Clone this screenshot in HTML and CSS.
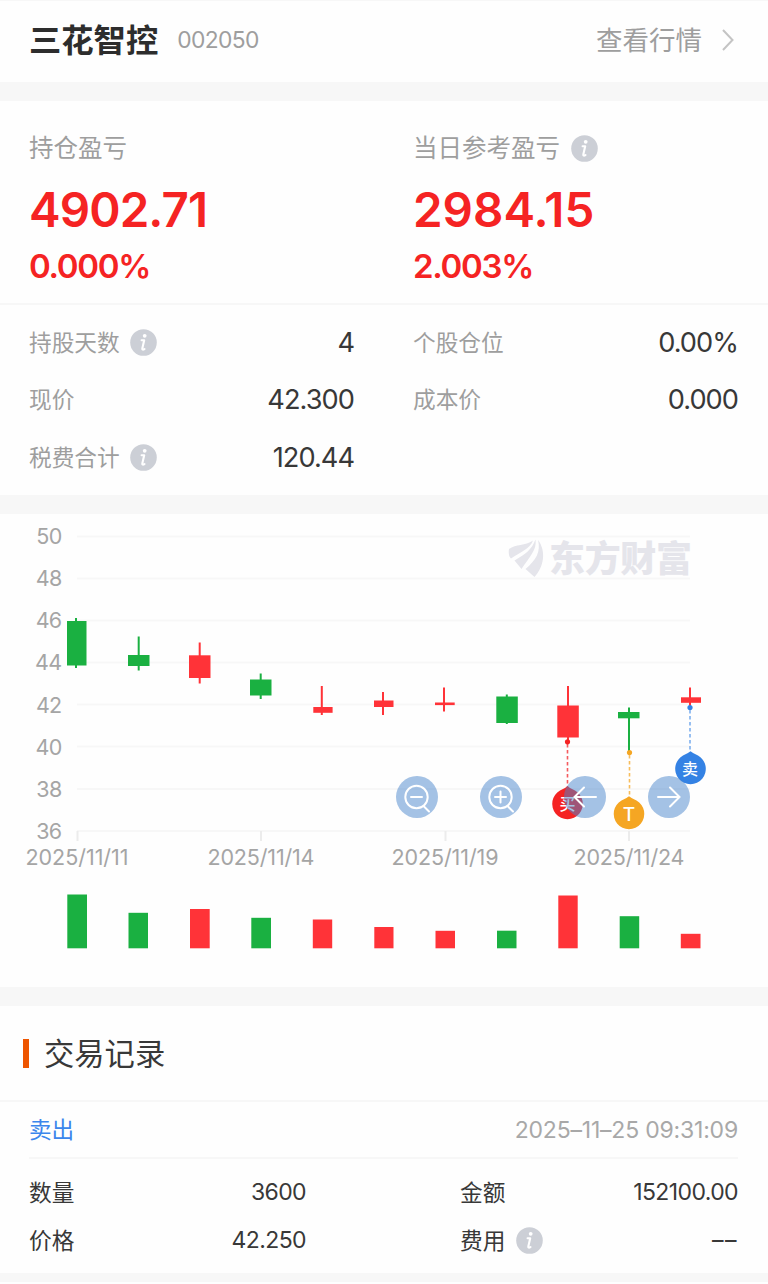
FILE: index.html
```html
<!DOCTYPE html>
<html lang="zh-CN">

<head>
    <meta charset="UTF-8">
    <meta name="viewport" content="width=device-width, initial-scale=1.0">
    <title>三花智控 002050</title>
    <link rel="stylesheet" href="styles.css">
</head>

<body>

    <svg class="defs" width="0" height="0">
        <symbol id="info" viewBox="0 0 27 27">
            <circle cx="13.5" cy="13.5" r="13.3" fill="#cccfd6" />
            <circle cx="14.7" cy="6.8" r="1.9" fill="#fff" />
            <path d="M11.600 11.200h2.600L12.300 19.500q-.2 1.900 2.200.6" fill="none" stroke="#fff" stroke-width="2.100" stroke-linecap="round" stroke-linejoin="round" />
        </symbol>
    </svg>

    <header class="header">
        <h1 class="stock-name">三花智控</h1>
        <span class="stock-code">002050</span>
        <a class="quote-link" href="#">查看行情
            <svg class="chevron" viewBox="0 0 12 22"><path d="M1 1l9.500 10L1 21" /></svg>
        </a>
    </header>

    <section class="summary">
        <div class="profit">
            <div class="profit-item">
                <div class="profit-label">持仓盈亏</div>
                <div class="profit-value">4902.71</div>
                <div class="profit-rate">0.000%</div>
            </div>
            <div class="profit-item">
                <div class="profit-label">当日参考盈亏<svg class="info"><use href="#info" /></svg></div>
                <div class="profit-value today">2984.15</div>
                <div class="profit-rate">2.003%</div>
            </div>
        </div>
        <div class="details">
            <div class="detail"><span class="label">持股天数</span><svg class="info"><use href="#info" /></svg><b class="num">4</b></div>
            <div class="detail"><span class="label">个股仓位</span><b class="num">0.00%</b></div>
            <div class="detail"><span class="label">现价</span><b class="num">42.300</b></div>
            <div class="detail"><span class="label">成本价</span><b class="num">0.000</b></div>
            <div class="detail"><span class="label">税费合计</span><svg class="info"><use href="#info" /></svg><b class="num">120.44</b></div>
        </div>
    </section>

    <section class="chart-section">
        <svg class="chart" viewBox="0 514 768 473">
            <!-- grid -->
            <path class="grid" d="M77 536.500H690M77 578.500H690M77 620.500H690M77 662.500H690M77 704.500H690M77 746.500H690M77 789H690M77 831H690" />
            <path class="tick" d="M77.500 831v10M261 831v10M445.500 831v10M629 831v10" />

            <!-- watermark -->
            <g class="watermark">
                <path d="M509 549C516 544 525 546 533 540.500C530 549 520 552 511 558.500C508.500 556 508.500 552 509 549Z" />
                <path d="M535.500 539.500C537 550 530 556 521.500 569L514.500 560.500C526 554 532 549 535.500 539.500Z" />
                <path d="M538 540C546.500 551 544 567 534.500 577L525.500 569C536 560 541 552 538 540Z" />
                <text x="549" y="571.500" textLength="143">东方财富</text>
            </g>

            <g class="y-axis">
                <text x="61.500" y="544">50</text>
                <text x="61.500" y="586">48</text>
                <text x="61.500" y="628.200">46</text>
                <text x="61.500" y="670.300">44</text>
                <text x="61.500" y="712.500">42</text>
                <text x="61.500" y="754.500">40</text>
                <text x="61.500" y="796.500">38</text>
                <text x="61.500" y="839">36</text>
            </g>
            <g class="x-axis">
                <text x="25.500" y="865" textLength="103">2025/11/11</text>
                <text x="207.500" y="865" textLength="107">2025/11/14</text>
                <text x="391.500" y="865" textLength="107">2025/11/19</text>
                <text x="573.500" y="865" textLength="111">2025/11/24</text>
            </g>

            <!-- candles -->
            <g class="down">
                <path d="M76 618v50M138.700 636.500v34M260.700 673.500v25.500M506.800 694.500v29.500M629 707.500v44" />
                <rect x="67" y="621" width="19.500" height="44.500" />
                <rect x="128" y="655" width="21.500" height="11" />
                <rect x="250" y="679.500" width="21.500" height="16" />
                <rect x="496.300" y="696.500" width="21.500" height="26.500" />
                <rect x="618" y="712" width="21.500" height="6.300" />
            </g>
            <g class="up">
                <path d="M199.700 642.500v41M321.800 686v29M383 692v23M444 687.500v24M568 686v56M690 687.500v19" />
                <rect x="189" y="655.300" width="21.500" height="22.700" />
                <rect x="313.300" y="707" width="19.300" height="5.800" />
                <rect x="374" y="700.500" width="19.500" height="6.500" />
                <rect x="435" y="702.500" width="19.700" height="2.600" />
                <rect x="557.300" y="705.500" width="21.500" height="32" />
                <rect x="681" y="697.300" width="20" height="5.500" />
            </g>

            <!-- volume -->
            <g class="down">
                <rect x="67.300" y="894.500" width="19.700" height="53.800" />
                <rect x="128.500" y="912.800" width="19.500" height="35.500" />
                <rect x="251.300" y="917.800" width="19.700" height="30.500" />
                <rect x="497" y="930.700" width="19.500" height="17.600" />
                <rect x="619.700" y="916.200" width="19.500" height="32.100" />
            </g>
            <g class="up">
                <rect x="190" y="909" width="19.700" height="39.300" />
                <rect x="312.800" y="919.500" width="19.400" height="28.800" />
                <rect x="374.300" y="927" width="19.200" height="21.300" />
                <rect x="435.500" y="930.800" width="19.500" height="17.500" />
                <rect x="558.300" y="895.500" width="19.400" height="52.800" />
                <rect x="680.800" y="933.800" width="19.700" height="14.500" />
            </g>

            <!-- trade marks -->
            <g class="mark buy">
                <path class="lead" d="M567.500 744v43" />
                <circle cx="567.500" cy="741.800" r="2.600" />
                <path d="M567.500 786.300Q570 788.500 575 790.500A15.300 15.300 0 1 1 560 790.500Q565 788.500 567.500 786.300Z" />
                <text x="567.500" y="809.500">买</text>
            </g>
            <g class="mark both">
                <path class="lead" d="M629.500 755v42" />
                <circle cx="629.500" cy="752.500" r="2.600" />
                <path d="M629 796.300Q631.500 798.500 636.500 800.500A15.300 15.300 0 1 1 621.500 800.500Q626.500 798.500 629 796.300Z" />
                <text class="letter" x="629" y="820.500">T</text>
            </g>
            <g class="mark sell">
                <path class="lead" d="M690 710v42" />
                <circle cx="690" cy="707.500" r="2.600" />
                <path d="M690.500 751.300Q693 753.500 698 755.500A15.300 15.300 0 1 1 683 755.500Q688 753.500 690.500 751.300Z" />
                <text x="690" y="774.500">卖</text>
            </g>
        </svg>

        <div class="chart-tools">
            <button class="tool"><svg viewBox="0 0 42 42"><circle cx="20.500" cy="21" r="11.200" /><path d="M15 21h11M28 30.500l5 5" /></svg></button>
            <button class="tool"><svg viewBox="0 0 42 42"><circle cx="20.500" cy="21" r="11.200" /><path d="M15 21h11M20.500 15.500v11M28 30.500l5 5" /></svg></button>
            <button class="tool"><svg viewBox="0 0 42 42"><path d="M32 21H10.500M20 11.500L10.500 21l9.500 9.500" /></svg></button>
            <button class="tool"><svg viewBox="0 0 42 42"><path d="M10 21h21.500M22 11.500l9.500 9.500-9.500 9.500" /></svg></button>
        </div>
    </section>

    <section class="records">
        <h2 class="records-title"><span>交易记录</span></h2>
        <div class="record">
            <div class="record-head">
                <span class="side">卖出</span>
                <span class="time">2025–11–25 09:31:09</span>
            </div>
            <div class="record-body">
                <div class="field"><span>数量</span><b class="amount">3600</b></div>
                <div class="field"><span>金额</span><b class="amount">152100.00</b></div>
                <div class="field"><span>价格</span><b class="amount">42.250</b></div>
                <div class="field"><span>费用</span><svg class="info"><use href="#info" /></svg><b class="amount empty">––</b></div>
            </div>
        </div>
    </section>

</body>

</html>
```
FILE: styles.css
```css
:root {
    --red: #f52323;
    --text: #383838;
    --muted: #9e9e9e;
    --line: #f7f7f7;
    --gap: #f7f7f7;
}

* {
    margin: 0;
    padding: 0;
    box-sizing: border-box;
}

body {
    font-family: Inter, "Noto Sans CJK SC", sans-serif;
    background-color: #fefefe;
    color: var(--text);
    overflow: hidden;
}

b {
    font-weight: 400;
}

.defs {
    display: block;
}

.header {
    display: flex;
    align-items: center;
    height: 101px;
    padding: 0 34px 4px 29px;
    border-top: 1px solid var(--gap);
    border-bottom: 19px solid var(--gap);
}

.stock-name {
    padding-top: 2px;
    font-size: 32.3px;
    font-weight: 700;
    line-height: 40px;
    color: #2d2d2d;
}

.stock-code {
    margin-left: 19px;
    font-size: 22.8px;
    letter-spacing: -0.6px;
    color: var(--muted);
}

.quote-link {
    display: flex;
    align-items: center;
    margin-left: auto;
    font-size: 26.5px;
    line-height: 40px;
    color: var(--muted);
    text-decoration: none;
}

.chevron {
    width: 12px;
    height: 22px;
    margin-left: 20px;
    fill: none;
    stroke: #c4c4c4;
    stroke-width: 2;
}

.info {
    width: 27px;
    height: 27px;
    margin-left: 10.5px;
}

.summary {
    height: 413px;
    border-bottom: 19px solid var(--gap);
}

.profit {
    display: grid;
    grid-template-columns: 1fr 1fr;
    height: 204px;
    padding-top: 27px;
    border-bottom: 2px solid var(--line);
}

.profit-item {
    padding-left: 29px;
}

.profit-label {
    display: flex;
    align-items: center;
    height: 41px;
    font-size: 24.5px;
    line-height: 41px;
    color: var(--muted);
}

.profit-value {
    height: 80px;
    font-size: 47.5px;
    font-weight: 600;
    line-height: 82px;
    letter-spacing: -0.9px;
    color: var(--red);
}

.today {
    letter-spacing: 0;
}

.profit-rate {
    margin-top: -5px;
    font-size: 33px;
    font-weight: 600;
    line-height: 44px;
    letter-spacing: -1.3px;
    color: var(--red);
}

.details {
    display: grid;
    grid-template-columns: 1fr 1fr;
    grid-auto-rows: 57.3px;
    padding-top: 9px;
}

.detail {
    display: flex;
    align-items: center;
    padding: 0 30px 0 29px;
    font-size: 22.7px;
}

.label,
.field span {
    margin-top: -2px;
}

.label {
    color: var(--muted);
}

.num {
    margin-left: auto;
    font-size: 27.2px;
    letter-spacing: -0.95px;
}

.chart-section {
    position: relative;
    height: 492px;
    border-bottom: 19px solid var(--gap);
}

.chart {
    display: block;
    width: 768px;
    height: 473px;
}

.grid {
    stroke: #f7f7f7;
    stroke-width: 2;
}

.tick {
    stroke: #ececec;
    stroke-width: 2;
}

.watermark {
    fill: #e5e5eb;
    font-size: 36px;
    font-weight: 900;
}

.y-axis,
.x-axis {
    fill: #a5a5a5;
    font-size: 21.5px;
}

.y-axis {
    text-anchor: end;
    letter-spacing: -0.7px;
}

.up {
    fill: #ff3338;
    stroke: #ff3338;
}

.down {
    fill: #1ab041;
    stroke: #1ab041;
}

.up path,
.down path {
    stroke-width: 2;
}

.up rect,
.down rect {
    stroke: none;
}

.mark text {
    fill: #fff;
    font-size: 16px;
    font-weight: 500;
    text-anchor: middle;
}

.mark .letter {
    font-size: 19px;
}

.lead {
    stroke-width: 1.6;
    stroke-dasharray: 3.5 2.5;
}

.buy {
    fill: #f52323;
    stroke: none;
}

.buy .lead {
    stroke: #f55a5e;
}

.both {
    fill: #f5a623;
}

.both .lead {
    stroke: #f7bd5c;
}

.sell {
    fill: #3482e4;
}

.sell .lead {
    stroke: #7eb0ee;
}

/* floats over the plot */
.chart-tools {
    position: absolute;
    top: 262px;
    left: 396px;
    display: flex;
    gap: 42px;
}

.tool {
    width: 42px;
    height: 42px;
    border: none;
    border-radius: 50%;
    background-color: rgba(73, 133, 203, 0.5);
}

.tool svg {
    display: block;
    fill: none;
    stroke: #fff;
    stroke-width: 2;
    stroke-linecap: round;
}

.records {
    height: 276px;
    border-bottom: 9px solid var(--gap);
}

.records-title {
    display: flex;
    align-items: center;
    height: 96px;
    padding-left: 23px;
    border-bottom: 2px solid var(--line);
    font-size: 30.3px;
    font-weight: 400;
}

.records-title span {
    margin-top: -3px;
}

.records-title::before {
    content: "";
    width: 6px;
    height: 29px;
    margin-right: 15px;
    background-color: #ee5500;
}

.record {
    padding: 0 30px 0 29px;
}

.record-head {
    display: flex;
    align-items: center;
    justify-content: space-between;
    height: 57px;
    border-bottom: 2px solid var(--line);
}

.side {
    margin-top: -2px;
    font-size: 22.6px;
    color: #3b86ec;
}

.time {
    font-size: 23px;
    letter-spacing: -0.2px;
    color: #a8a8a8;
}

.record-body {
    display: grid;
    grid-template-columns: 277px 278px;
    justify-content: space-between;
    grid-auto-rows: 48px;
    padding-top: 9px;
}

.field {
    display: flex;
    align-items: center;
    font-size: 22.7px;
}

.amount {
    margin-left: auto;
    font-size: 23px;
    letter-spacing: -0.6px;
}

.empty {
    letter-spacing: 1.5px;
}
```
